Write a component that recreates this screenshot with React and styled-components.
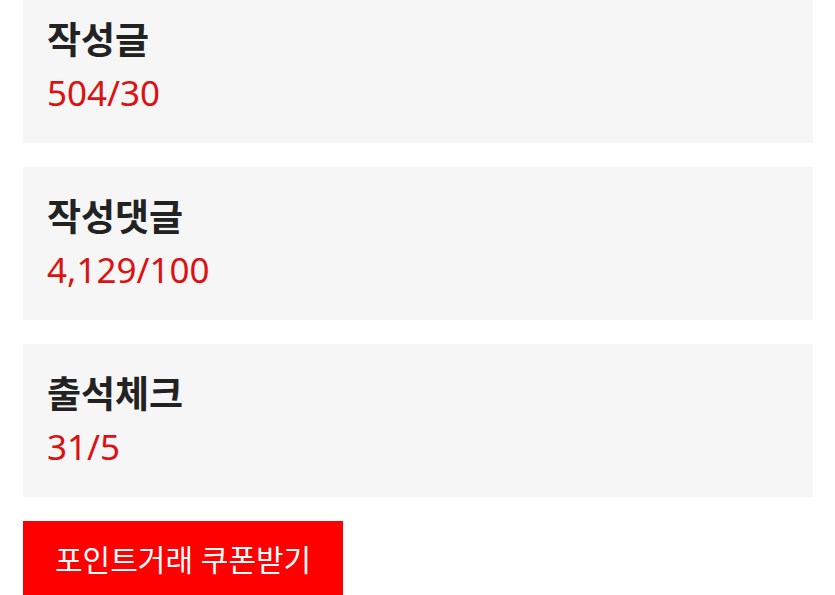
import React from "react";
import styled, { createGlobalStyle } from "styled-components";

const stats = [
  { name: "작성글", value: "504/30" },
  { name: "작성댓글", value: "4,129/100" },
  { name: "출석체크", value: "31/5" },
];

export default function App() {
  return (
    <>
      <GlobalStyle />
      <Wrap>
        {stats.map((item) => (
          <Card key={item.name}>
            <Title>{item.name}</Title>
            <Value>{item.value}</Value>
          </Card>
        ))}
        <CouponButton>포인트거래 쿠폰받기</CouponButton>
      </Wrap>
    </>
  );
}

const GlobalStyle = createGlobalStyle`
    html, body {
        margin: 0;
        padding: 0;
        background: #FFFFFF;
        overflow: hidden;
    }
    body {
        font-family: "Noto Sans", "Noto Sans CJK KR", sans-serif;
    }
`;

const Wrap = styled.div`
    display: flex;
    flex-direction: column;
    align-items: flex-start;
    gap: 24px;
    margin-top: -10px;
    padding: 0 22px 0 23px;
`;

const Card = styled.div`
    align-self: stretch;
    background-color: #F6F6F6;
    padding: 24px;
`;

const Title = styled.div`
    font-family: "Noto Sans", "Noto Sans CJK KR", sans-serif;
    font-size: 37px;
    line-height: 52px;
    font-weight: 700;
    color: #222222;
`;

const Value = styled.div`
    font-size: 35px;
    line-height: 53px;
    color: #DD1111;
`;

const CouponButton = styled.button`
    background: #FF0000;
    border: none;
    border-radius: 0;
    color: #FFFFFF;
    font-family: "Noto Sans", "Noto Sans CJK KR", sans-serif;
    font-size: 30px;
    line-height: 42px;
    padding: 18px 32px;
    cursor: pointer;
`;
